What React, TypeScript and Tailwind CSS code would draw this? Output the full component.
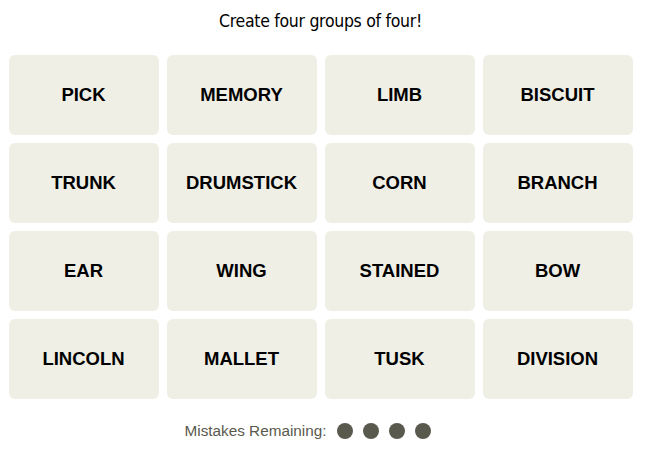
const words = [
  "PICK", "MEMORY", "LIMB", "BISCUIT",
  "TRUNK", "DRUMSTICK", "CORN", "BRANCH",
  "EAR", "WING", "STAINED", "BOW",
  "LINCOLN", "MALLET", "TUSK", "DIVISION",
]

export default function App() {
  return (
    <div className="flex h-[451px] w-[653px] flex-col items-center bg-white pr-[12px] font-['Liberation_Sans',sans-serif] text-black">
      <p className="mt-[10px] h-[22px] text-[17.5px] leading-[22px] font-['DejaVu_Sans_Condensed','DejaVu_Sans',sans-serif] [font-stretch:condensed] tracking-[-0.3px]">
        Create four groups of four!
      </p>

      <div className="mt-[23px] grid grid-cols-[repeat(4,150px)] grid-rows-[repeat(4,80px)] gap-2">
        {words.map((w) => (
          <div
            key={w}
            className="flex items-center justify-center rounded-md bg-[#efefe6] text-[18.5px] font-bold"
          >
            {w}
          </div>
        ))}
      </div>

      <div className="mt-[22px] mr-[25px] flex h-[20px] items-center">
        <span className="text-[15.3px] text-[#5a594e]">Mistakes Remaining:</span>
        <div className="ml-[11px] flex gap-[10px]">
          {[0, 1, 2, 3].map((i) => (
            <span key={i} className="size-4 rounded-full bg-[#5a594e]" />
          ))}
        </div>
      </div>
    </div>
  )
}
